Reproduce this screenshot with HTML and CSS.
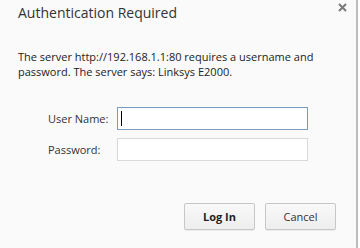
FILE: index.html
```html
<!DOCTYPE html>
<html lang="en">
<head>
    <meta charset="UTF-8">
    <title>Authentication Required</title>
    <link rel="stylesheet" href="styles.css">
</head>
<body>
    <div class="dialog">
        <button class="close-button" aria-label="Close">
            <svg width="9" height="9" viewBox="0 0 9 9">
                <path d="M1 1 L8 8 M8 1 L1 8" stroke="#7a7a7a" stroke-width="2" />
            </svg>
        </button>

        <h1 class="dialog-title">Authentication Required</h1>

        <p class="message">The server http://192.168.1.1:80 requires a username and password. The server says: Linksys E2000.</p>

        <div class="login-form">
            <label for="username">User Name:</label>
            <div class="field focused"><span class="caret"></span></div>

            <label for="password">Password:</label>
            <div class="field"></div>
        </div>

        <div class="button-row">
            <button class="dialog-button primary">Log In</button>
            <button class="dialog-button">Cancel</button>
        </div>
    </div>
</body>
</html>
```

FILE: styles.css
```css
* {
    margin: 0;
    padding: 0;
    box-sizing: border-box;
    font-family: 'Segoe UI', 'Open Sans', sans-serif;
}

body {
    background: #ffffff;
    width: 360px;
    height: 248px;
    overflow: hidden;
}

.dialog {
    position: relative;
    width: 358px;
    height: 248px;
    background: #fafafa;
    border-right: 2px solid #bdbdbd;
    padding: 2px 20px 0 18px;
    color: #222;
}

.close-button {
    position: absolute;
    top: 2px;
    right: 8px;
    width: 11px;
    height: 11px;
    border: none;
    background: none;
    display: flex;
    align-items: center;
    justify-content: center;
}

.dialog-title {
    font-size: 14px;
    font-weight: 400;
    color: #333;
    line-height: 22px;
}

.message {
    margin-top: 25px;
    font-size: 11px;
    line-height: 15px;
    color: #222;
}

.login-form {
    display: grid;
    grid-template-columns: 69px 191px;
    row-gap: 8px;
    align-items: center;
    margin-top: 28px;
    padding-left: 30px;
}

.login-form label {
    font-size: 11px;
    color: #333;
}

.field {
    height: 23px;
    border: 1px solid #d9d9d9;
    background: #fff;
    padding: 3px 3px;
}

.field.focused {
    border-color: #7a9cba;
}

.caret {
    display: block;
    width: 1px;
    height: 15px;
    background: #000;
}

.button-row {
    display: flex;
    justify-content: flex-end;
    gap: 10px;
    margin-top: 42px;
}

.dialog-button {
    width: 71px;
    height: 27px;
    border: 1px solid #c6c6c6;
    border-radius: 2px;
    background: linear-gradient(#f9f9f9, #ededed);
    box-shadow: 0 1px 0 rgba(0, 0, 0, 0.06);
    font-size: 11px;
    color: #333;
}

.dialog-button.primary {
    font-weight: 700;
    color: #222;
}
```
